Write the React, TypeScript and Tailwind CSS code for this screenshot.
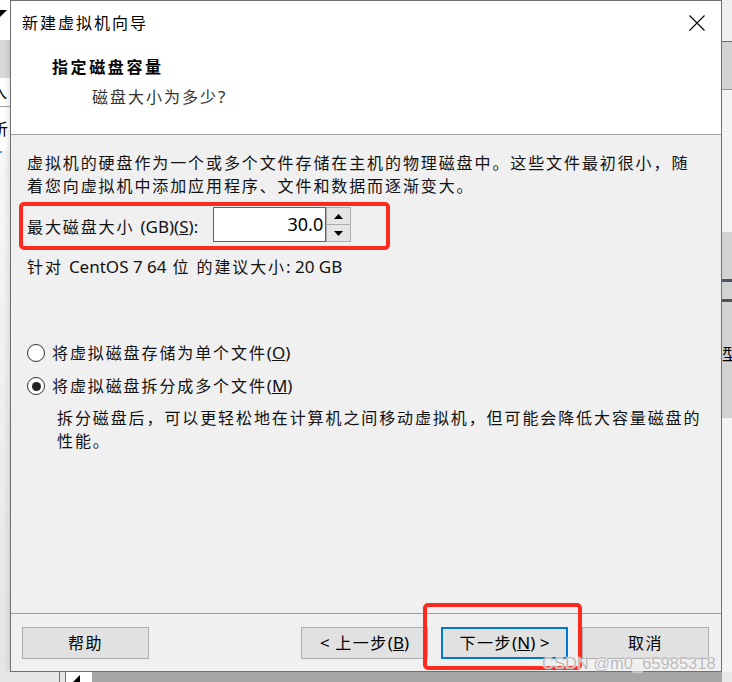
import React from "react"

const cjk = "font-['Noto_Sans','Noto_Sans_CJK_SC',sans-serif]"

function Latin({ children }: { children: React.ReactNode }) {
  return <span className="text-[17px] tracking-normal">{children}</span>
}

function Radio({ checked }: { checked?: boolean }) {
  return (
    <span className="flex h-[18px] w-[18px] shrink-0 items-center justify-center rounded-full border border-[#333333] bg-white">
      {checked && <span className="h-[9px] w-[9px] rounded-full bg-[#222222]" />}
    </span>
  )
}

function Arrow({ up }: { up?: boolean }) {
  return (
    <svg width="9" height="5" viewBox="0 0 9 5">
      <path d={up ? "M0 5 L4.5 0 L9 5 Z" : "M0 0 L4.5 5 L9 0 Z"} fill="#000" />
    </svg>
  )
}

export default function App() {
  return (
    <div className={`relative flex h-[682px] w-[732px] flex-col overflow-hidden bg-[#f3f3f3] ${cjk}`}>
      <div className="flex h-[672px]">
        {/* background window, left */}
        <div className="flex w-[10px] flex-col overflow-hidden">
          <div className="relative h-[40px] bg-white">
            <svg className="absolute left-0 top-[10px]" width="7" height="7" viewBox="0 0 7 7">
              <path d="M0 0 L7 0 L0 7 Z" fill="#000" />
            </svg>
          </div>
          <div className="h-[38px] bg-[#dadada]" />
          <div className="flex h-[28px] items-center bg-white">
            <span className="-ml-[9px] text-[16px] leading-none text-black">入</span>
          </div>
          <div className="h-px bg-[#a0a0a0]" />
          <div className="flex h-[44px] items-center bg-white">
            <span className="-ml-[8px] text-[16px] leading-none text-black">析</span>
          </div>
          <div className="h-[2px] w-[2px] bg-[#4aa3df]" />
          <div className="flex-1 bg-gradient-to-b from-[#f8f8f8] to-[#e6e6e6]" />
        </div>

        {/* dialog */}
        <div className="flex w-[712px] flex-col border border-[#707070] bg-[#f0f0f0] shadow-[0_0_8px_rgba(0,0,0,0.18)]">
          <div className="h-[134px] border-b border-[#a0a0a0] bg-white">
            <div className="flex h-[43px] items-center justify-between pl-[11px] pr-[16px]">
              <span className="text-[16px] tracking-[2px] text-black">新建虚拟机向导</span>
              <svg width="16" height="16" viewBox="0 0 16 16">
                <path d="M0.5 0.5 L15.5 15.5 M15.5 0.5 L0.5 15.5" stroke="#000" strokeWidth="1.1" />
              </svg>
            </div>
            <div className="pl-[41px] pt-[12px]">
              <div className="text-[16px] font-bold leading-[23px] tracking-[2.6px] text-black">指定磁盘容量</div>
              <div className="mt-[6px] pl-[40px] text-[16px] leading-[23px] tracking-[2px] text-[#333333]">
                磁盘大小为多少<Latin>?</Latin>
              </div>
            </div>
          </div>

          <div className="h-[479px] border-b border-[#a0a0a0] pl-[16px] pt-[17px] text-[16px] leading-[23px] tracking-[1.9px] text-[#111111]">
            <div>虚拟机的硬盘作为一个或多个文件存储在主机的物理磁盘中。这些文件最初很小，随</div>
            <div>着您向虚拟机中添加应用程序、文件和数据而逐渐变大。</div>

            <div className="-ml-[8px] mt-[4px] flex h-[48px] w-[371px] items-start rounded-[5px] border-4 border-[#ff2a1f] pl-[4px]">
              <span className="mt-[9px] whitespace-nowrap">
                最大磁盘大小 <Latin>(GB)(<span className="underline">S</span>):</Latin>
              </span>
              <div className="ml-[15px] mt-[1px] flex h-[35px]">
                <div className="flex w-[113px] items-center justify-end border border-[#0078d7] bg-white pr-[2px] text-[18px] tracking-normal text-black">
                  30.0
                </div>
                <div className="flex w-[25px] flex-col">
                  <div className="flex flex-1 items-center justify-center border border-[#adadad] bg-[#e5e5e5]">
                    <Arrow up />
                  </div>
                  <div className="flex flex-1 items-center justify-center border border-t-0 border-[#adadad] bg-[#e5e5e5]">
                    <Arrow />
                  </div>
                </div>
              </div>
            </div>

            <div className="mt-[5px]">
              针对 <Latin>CentOS 7 64</Latin> 位 的建议大小<Latin>: 20 GB</Latin>
            </div>

            <div className="mt-[62px] flex items-center gap-[7px]">
              <Radio />
              <span>
                将虚拟磁盘存储为单个文件<Latin>(<span className="underline">O</span>)</Latin>
              </span>
            </div>
            <div className="mt-[9px] flex items-center gap-[7px]">
              <Radio checked />
              <span>
                将虚拟磁盘拆分成多个文件<Latin>(<span className="underline">M</span>)</Latin>
              </span>
            </div>
            <div className="mt-[9px] pl-[30px]">
              <div>拆分磁盘后，可以更轻松地在计算机之间移动虚拟机，但可能会降低大容量磁盘的</div>
              <div>性能。</div>
            </div>
          </div>

          <div className="flex flex-1 items-start pl-[11px] pr-[12px] pt-[13px] text-[16px] tracking-[1.5px] text-black">
            <button className="flex h-[32px] w-[127px] items-center justify-center border border-[#adadad] bg-[#e1e1e1]">
              帮助
            </button>
            <div className="flex-1" />
            <button className="flex h-[32px] w-[127px] items-center justify-center border border-[#adadad] bg-[#e1e1e1]">
              <Latin>&lt;</Latin>&nbsp;上一步<Latin>(<span className="underline">B</span>)</Latin>
            </button>
            <button className="ml-[13px] flex h-[32px] w-[127px] items-center justify-center border-2 border-[#0078d7] bg-[#e1e1e1]">
              下一步<Latin>(<span className="underline">N</span>) &gt;</Latin>
            </button>
            <button className="ml-[14px] flex h-[32px] w-[127px] items-center justify-center border border-[#adadad] bg-[#e1e1e1]">
              取消
            </button>
          </div>
        </div>

        {/* background window, right */}
        <div className="flex flex-1 flex-col overflow-hidden">
          <div className="h-[41px] bg-[#f0f0f0]" />
          <div className="h-px bg-[#707070]" />
          <div className="h-[47px] bg-[#d3d3d3]" />
          <div className="h-px bg-[#6a9ec0]" />
          <div className="h-[142px] bg-[#f3f3f3]" />
          <div className="flex h-[186px] flex-col bg-[#d2d2d2]">
            <div className="h-[47px]" />
            <div className="h-[3px] bg-[#4a5560]" />
            <div className="h-[17px]" />
            <div className="h-[3px] bg-[#4a5560]" />
            <div className="flex h-[60px] items-end">
              <span className="text-[16px] leading-none text-black">型</span>
            </div>
          </div>
          <div className="flex-1 bg-[#f3f3f3]" />
        </div>
      </div>

      {/* background window, bottom */}
      <div className="flex h-[10px]">
        <div className="w-[59px] bg-[#e6e6e6]" />
        <div className="w-px bg-[#707070]" />
        <div className="w-[5px] bg-[#e6e6e6]" />
        <div className="w-px bg-[#707070]" />
        <div className="relative w-[26px] bg-white">
          <svg className="absolute left-[7px] top-[3px]" width="7" height="7" viewBox="0 0 7 7">
            <path d="M7 0 L7 7 L0 7 Z" fill="#000" />
          </svg>
        </div>
        <div className="w-[630px] bg-[#a6a6a6]" />
        <div className="flex-1 bg-[#e8e8e8]" />
      </div>

      {/* annotation around the next button */}
      <div className="absolute left-[423px] top-[603px] h-[67px] w-[159px] rounded-[5px] border-4 border-[#ff2a1f]" />

      {/* watermark */}
      <div className="absolute left-[542px] top-[652px] font-['Liberation_Sans',sans-serif] text-[16.5px] leading-[22px] text-[#b8b8b8] [text-shadow:0_0_1px_#fff,0_0_1px_#fff]">
        CSDN @m0_65985318
      </div>
    </div>
  )
}
